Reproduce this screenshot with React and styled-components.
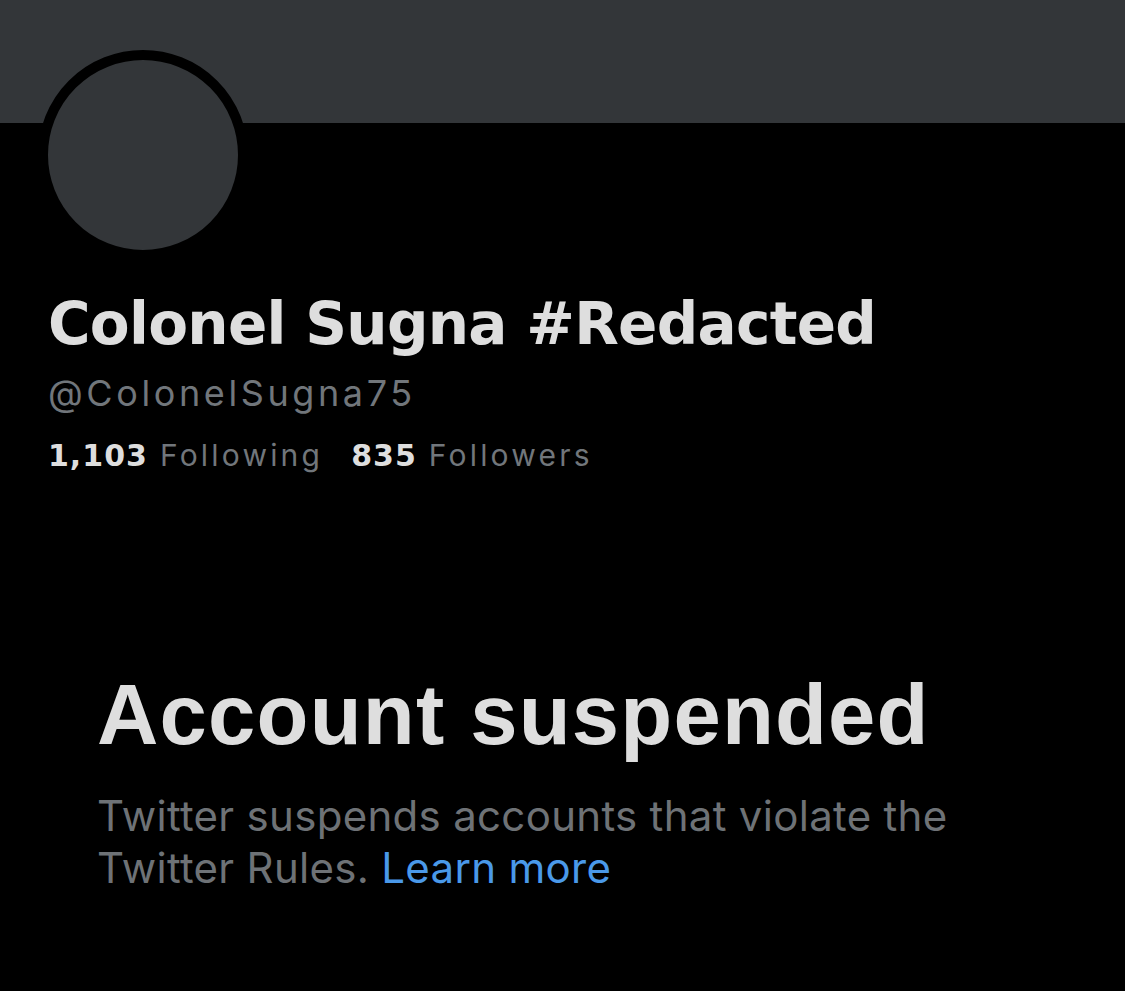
import React from 'react';
import styled, { createGlobalStyle } from "styled-components";

const GlobalStyle = createGlobalStyle`
    html, body {
        margin: 0;
        padding: 0;
        background: #000000;
    }
    body {
        font-family: Inter, "Liberation Sans", Arial, sans-serif;
    }
`;

const Page = styled.div`
    width: 1125px;
    height: 991px;
    background: #000000;
    overflow: hidden;
`;

const Banner = styled.div`
    height: 123px;
    background-color: #333639;
`;

const Profile = styled.div`
    padding-left: 38px;
`;

const Avatar = styled.div`
    box-sizing: border-box;
    width: 210px;
    height: 210px;
    margin-top: -73px;
    border-radius: 50%;
    border: 10px solid #000000;
    background-color: #333639;
`;

const Info = styled.div`
    padding-left: 10px;
`;

const Name = styled.h1`
    margin: 28px 0 0 0;
    font-family: "DejaVu Sans", "Liberation Sans", sans-serif;
    font-size: 58px;
    line-height: 72px;
    font-weight: 700;
    letter-spacing: -0.7px;
    color: #dedede;
`;

const Handle = styled.div`
    margin-top: 12px;
    font-size: 36px;
    line-height: 42px;
    letter-spacing: 3.6px;
    color: #71767b;
`;

const Stats = styled.div`
    display: flex;
    gap: 28px;
    margin-top: 21px;
    font-size: 30px;
    line-height: 40px;
    letter-spacing: 3.2px;
`;

const Stat = styled.span`
    color: #71767b;
    b {
        font-family: "DejaVu Sans", "Liberation Sans", sans-serif;
        color: #dedede;
        font-weight: 700;
        letter-spacing: 1px;
        margin-right: 12px;
    }
`;

const Suspended = styled.div`
    padding-left: 97px;
    padding-right: 60px;
    margin-top: 189px;
`;

const Heading = styled.h2`
    margin: 0;
    font-family: "Liberation Sans", Arial, sans-serif;
    font-size: 85px;
    line-height: 100px;
    font-weight: 700;
    letter-spacing: 1.2px;
    color: #dedede;
`;

const Body = styled.p`
    margin: 25px 0 0 0;
    font-size: 42px;
    line-height: 52px;
    letter-spacing: 0.3px;
    color: #6e7276;
    max-width: 900px;
`;

const Link = styled.a`
    color: #4a99e9;
    text-decoration: none;
`;

const App = () => {
    return (
        <Page>
            <GlobalStyle />
            <Banner />
            <Profile>
                <Avatar />
                <Info>
                    <Name>Colonel Sugna #Redacted</Name>
                    <Handle>@ColonelSugna75</Handle>
                    <Stats>
                        <Stat><b>1,103</b>Following</Stat>
                        <Stat><b>835</b>Followers</Stat>
                    </Stats>
                </Info>
            </Profile>
            <Suspended>
                <Heading>Account suspended</Heading>
                <Body>
                    Twitter suspends accounts that violate the Twitter Rules. <Link href="#">Learn more</Link>
                </Body>
            </Suspended>
        </Page>
    );
};

export default App;
